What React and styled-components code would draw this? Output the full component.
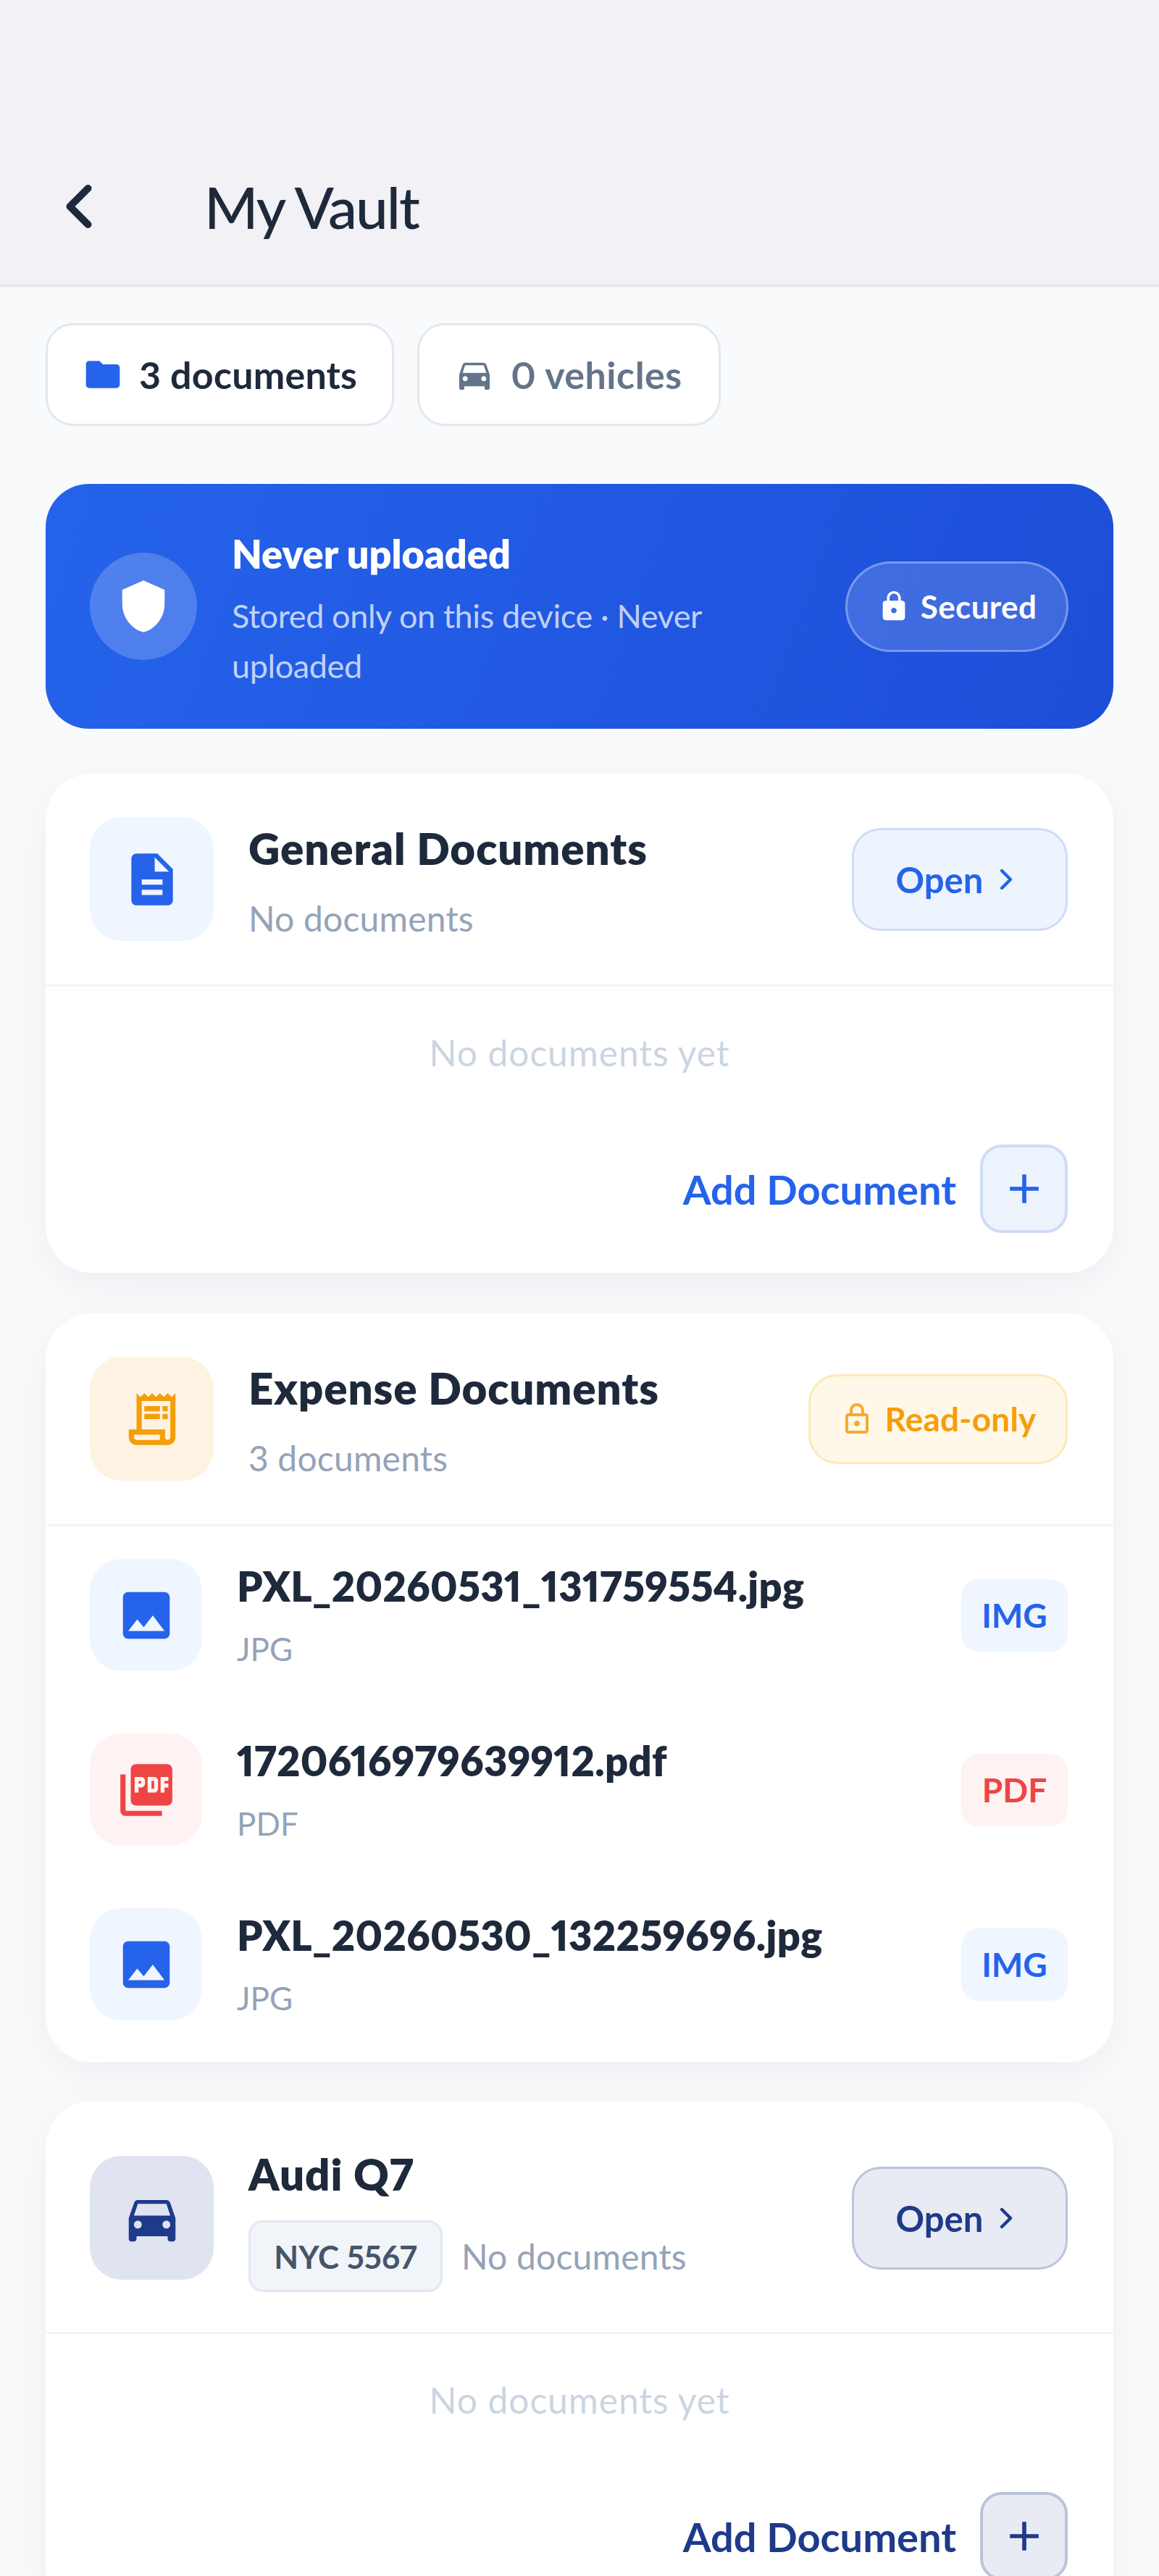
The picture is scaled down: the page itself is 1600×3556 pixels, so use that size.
import React from 'react';
import styled, { createGlobalStyle } from 'styled-components';
import { ChevronLeft, ChevronRight } from 'lucide-react';
import {
  MdAdd,
  MdDescription,
  MdDirectionsCar,
  MdFolder,
  MdImage,
  MdLock,
  MdOutlineLock,
  MdOutlineReceiptLong,
  MdPictureAsPdf,
  MdShield,
} from 'react-icons/md';

const tones = {
  blue: { solid: '#2563eb', soft: '#eff6ff', line: '#cfdcf6', action: '#eef4fe' },
  navy: { solid: '#1e3a8a', soft: '#e0e4f0', line: '#bcc3da', action: '#e8ebf4' },
  amber: { solid: '#f59e0b', soft: '#fef3e2', line: '#fde9b8', action: '#fff8e8' },
  red: { solid: '#ef4444', soft: '#fef2f2', line: '#fee2e2', action: '#fef2f2' },
};

const GlobalStyle = createGlobalStyle`
  html, body {
    margin: 0;
    padding: 0;
    background: #f8fafc;
  }
  body {
    font-family: Lato, "Noto Sans", sans-serif;
    font-variant-numeric: proportional-nums;
    color: #1e293b;
  }
  * {
    box-sizing: border-box;
  }
`;

const Page = styled.div`
  width: 1600px;
  height: 3556px;
  overflow: hidden;
  background: #f8fafc;
`;

const Header = styled.header`
  height: 396px;
  padding: 176px 0 0 59px;
  display: flex;
  align-items: center;
  gap: 123px;
  background: #f1f1f6;
  border-bottom: 3px solid #e2e5ea;
`;

const BackIcon = styled(ChevronLeft)`
  display: block;
  color: #1e293b;
  flex-shrink: 0;
`;

const Title = styled.h1`
  margin: 0;
  font-size: 80px;
  font-weight: 500;
  letter-spacing: -2px;
  color: #1e293b;
`;

const Content = styled.main`
  padding: 50px 63px 0;
  display: flex;
  flex-direction: column;
`;

const Chips = styled.div`
  display: flex;
  gap: 32px;
  margin-bottom: 80px;
`;

const Chip = styled.div`
  height: 142px;
  padding: 0 ${(p) => (p.$active ? 48 : 50)}px 0 48px;
  display: flex;
  align-items: center;
  gap: 22px;
  background: #fff;
  border: 3px solid #e2e8f0;
  border-radius: 38px;
  font-size: 52px;
  font-weight: 700;
  letter-spacing: ${(p) => (p.$active ? 0.2 : 0.5)}px;
  color: ${(p) => (p.$active ? '#1e293b' : '#64748b')};
  svg {
    color: ${(p) => (p.$active ? '#2563eb' : '#64748b')};
  }
`;

const Banner = styled.section`
  height: 338px;
  padding: 0 62px 0 61px;
  display: flex;
  align-items: center;
  gap: 48px;
  margin-bottom: 62px;
  border-radius: 60px;
  background: linear-gradient(110deg, #2563eb, #1d4ed8);
`;

const ShieldCircle = styled.div`
  width: 148px;
  height: 148px;
  border-radius: 50%;
  flex-shrink: 0;
  display: flex;
  align-items: center;
  justify-content: center;
  background: rgba(255, 255, 255, 0.2);
  color: #fff;
`;

const BannerText = styled.div`
  flex: 1;
  min-width: 0;
  padding-top: 10px;
`;

const BannerTitle = styled.div`
  font-size: 54px;
  line-height: 70px;
  font-weight: 800;
  color: #fff;
  margin-bottom: 16px;
`;

const BannerSub = styled.div`
  font-size: 45px;
  line-height: 69px;
  letter-spacing: -0.4px;
  color: rgba(255, 255, 255, 0.72);
`;

const SecuredPill = styled.div`
  width: 308px;
  height: 125px;
  flex-shrink: 0;
  display: flex;
  align-items: center;
  justify-content: center;
  gap: 14px;
  border-radius: 63px;
  background: rgba(255, 255, 255, 0.15);
  border: 3px solid rgba(255, 255, 255, 0.3);
  color: #fff;
  font-size: 44px;
  font-weight: 700;
  letter-spacing: 0.4px;
`;

const Cards = styled.div`
  display: flex;
  flex-direction: column;
  gap: 56px;
`;

const Card = styled.section`
  background: #fff;
  border-radius: 64px;
  overflow: hidden;
  box-shadow: 0 16px 56px rgba(15, 23, 42, 0.05);
`;

const VehicleCard = styled(Card)`
  margin-top: -2px;
`;

const CardHead = styled.div`
  padding: ${(p) => (p.$tight ? '58px 63px 55px 61px' : '60px 63px 60px 61px')};
  display: flex;
  align-items: center;
  gap: 48px;
  border-bottom: 3px solid #f1f5f9;
`;

const IconBox = styled.div`
  width: ${(p) => p.$size}px;
  height: ${(p) => p.$size}px;
  flex-shrink: 0;
  display: flex;
  align-items: center;
  justify-content: center;
  border-radius: 44px;
  background: ${(p) => tones[p.$tone].soft};
  color: ${(p) => tones[p.$tone].solid};
`;

const HeadText = styled.div`
  flex: 1;
  min-width: 0;
`;

const CardTitle = styled.div`
  font-size: 60px;
  line-height: 84px;
  font-weight: 800;
  letter-spacing: 0.9px;
  color: #1e293b;
  margin-bottom: ${(p) => (p.$tight ? 22 : 25)}px;
`;

const CardSub = styled.div`
  font-size: 48px;
  line-height: 60px;
  letter-spacing: 0.2px;
  color: #94a3b8;
`;

const PlateRow = styled.div`
  display: flex;
  align-items: center;
  gap: 26px;
`;

const Plate = styled.div`
  width: 268px;
  height: 99px;
  display: flex;
  align-items: center;
  justify-content: center;
  border-radius: 20px;
  background: #f1f5f9;
  border: 3px solid #e2e8f0;
  font-size: 44px;
  font-weight: 700;
  color: #475569;
`;

const OpenButton = styled.button`
  width: 298px;
  height: 142px;
  flex-shrink: 0;
  display: flex;
  align-items: center;
  justify-content: center;
  gap: 8px;
  font: inherit;
  font-size: 49px;
  font-weight: 700;
  border-radius: 40px;
  background: ${(p) => tones[p.$tone].action};
  border: 3px solid ${(p) => tones[p.$tone].line};
  color: ${(p) => tones[p.$tone].solid};
`;

const ReadOnly = styled.div`
  width: 358px;
  height: 124px;
  flex-shrink: 0;
  display: flex;
  align-items: center;
  justify-content: center;
  gap: 14px;
  border-radius: 40px;
  background: ${tones.amber.action};
  border: 3px solid ${tones.amber.line};
  color: ${tones.amber.solid};
  font-size: 46px;
  font-weight: 700;
  letter-spacing: 0.2px;
  svg {
    opacity: 0.85;
  }
`;

const Empty = styled.div`
  padding: 59px 0 95px;
  text-align: center;
  font-size: 50px;
  line-height: 64px;
  letter-spacing: 0.8px;
  color: #cbd5e1;
`;

const AddRow = styled.div`
  padding: 0 63px 55px;
  display: flex;
  align-items: center;
  justify-content: flex-end;
  gap: 33px;
  font-size: 56px;
  font-weight: 700;
  color: ${(p) => tones[p.$tone].solid};
`;

const AddButton = styled.button`
  width: 121px;
  height: 122px;
  padding: 0;
  display: flex;
  align-items: center;
  justify-content: center;
  border-radius: 30px;
  background: ${(p) => tones[p.$tone].action};
  border: 4px solid ${(p) => tones[p.$tone].line};
  color: ${(p) => tones[p.$tone].solid};
`;

const FileList = styled.div`
  padding: 45px 63px 58px 61px;
  display: flex;
  flex-direction: column;
  gap: 86px;
`;

const FileRow = styled.div`
  display: flex;
  align-items: center;
  gap: 48px;
`;

const FileText = styled.div`
  flex: 1;
  min-width: 0;
`;

const FileName = styled.div`
  font-size: 56px;
  line-height: 70px;
  font-weight: 800;
  letter-spacing: 0.3px;
  color: #1e293b;
  margin-bottom: 23px;
`;

const FileKind = styled.div`
  font-size: 44px;
  line-height: 56px;
  color: #94a3b8;
`;

const Badge = styled.div`
  width: 147px;
  height: 100px;
  flex-shrink: 0;
  display: flex;
  align-items: center;
  justify-content: center;
  border-radius: 24px;
  background: ${(p) => tones[p.$tone].soft};
  color: ${(p) => tones[p.$tone].solid};
  font-size: 46px;
  font-weight: 700;
`;

const files = [
  { name: 'PXL_20260531_131759554.jpg', kind: 'JPG', badge: 'IMG', tone: 'blue', Icon: MdImage },
  { name: '1720616979639912.pdf', kind: 'PDF', badge: 'PDF', tone: 'red', Icon: MdPictureAsPdf },
  { name: 'PXL_20260530_132259696.jpg', kind: 'JPG', badge: 'IMG', tone: 'blue', Icon: MdImage },
];

function OpenAction({ tone }) {
  return (
    <OpenButton $tone={tone}>
      Open
      <ChevronRight size={48} strokeWidth={2.2} />
    </OpenButton>
  );
}

function EmptyBody({ tone }) {
  return (
    <>
      <Empty>No documents yet</Empty>
      <AddRow $tone={tone}>
        Add Document
        <AddButton $tone={tone}>
          <MdAdd size={68} />
        </AddButton>
      </AddRow>
    </>
  );
}

export default function App() {
  return (
    <Page>
      <GlobalStyle />
      <Header>
        <BackIcon size={100} strokeWidth={2.4} />
        <Title>My Vault</Title>
      </Header>
      <Content>
        <Chips>
          <Chip $active>
            <MdFolder size={56} />
            3 documents
          </Chip>
          <Chip>
            <MdDirectionsCar size={56} />
            0 vehicles
          </Chip>
        </Chips>

        <Banner>
          <ShieldCircle>
            <MdShield size={78} />
          </ShieldCircle>
          <BannerText>
            <BannerTitle>Never uploaded</BannerTitle>
            <BannerSub>Stored only on this device · Never uploaded</BannerSub>
          </BannerText>
          <SecuredPill>
            <MdLock size={46} />
            Secured
          </SecuredPill>
        </Banner>

        <Cards>
          <Card>
            <CardHead>
              <IconBox $size={171} $tone="blue">
                <MdDescription size={86} />
              </IconBox>
              <HeadText>
                <CardTitle>General Documents</CardTitle>
                <CardSub>No documents</CardSub>
              </HeadText>
              <OpenAction tone="blue" />
            </CardHead>
            <EmptyBody tone="blue" />
          </Card>

          <Card>
            <CardHead>
              <IconBox $size={171} $tone="amber">
                <MdOutlineReceiptLong size={86} />
              </IconBox>
              <HeadText>
                <CardTitle>Expense Documents</CardTitle>
                <CardSub>3 documents</CardSub>
              </HeadText>
              <ReadOnly>
                <MdOutlineLock size={48} />
                Read-only
              </ReadOnly>
            </CardHead>
            <FileList>
              {files.map((file) => (
                <FileRow key={file.name}>
                  <IconBox $size={155} $tone={file.tone}>
                    <file.Icon size={86} />
                  </IconBox>
                  <FileText>
                    <FileName>{file.name}</FileName>
                    <FileKind>{file.kind}</FileKind>
                  </FileText>
                  <Badge $tone={file.tone}>{file.badge}</Badge>
                </FileRow>
              ))}
            </FileList>
          </Card>

          <VehicleCard>
            <CardHead $tight>
              <IconBox $size={171} $tone="navy">
                <MdDirectionsCar size={86} />
              </IconBox>
              <HeadText>
                <CardTitle $tight>Audi Q7</CardTitle>
                <PlateRow>
                  <Plate>NYC 5567</Plate>
                  <CardSub>No documents</CardSub>
                </PlateRow>
              </HeadText>
              <OpenAction tone="navy" />
            </CardHead>
            <EmptyBody tone="navy" />
          </VehicleCard>
        </Cards>
      </Content>
    </Page>
  );
}
